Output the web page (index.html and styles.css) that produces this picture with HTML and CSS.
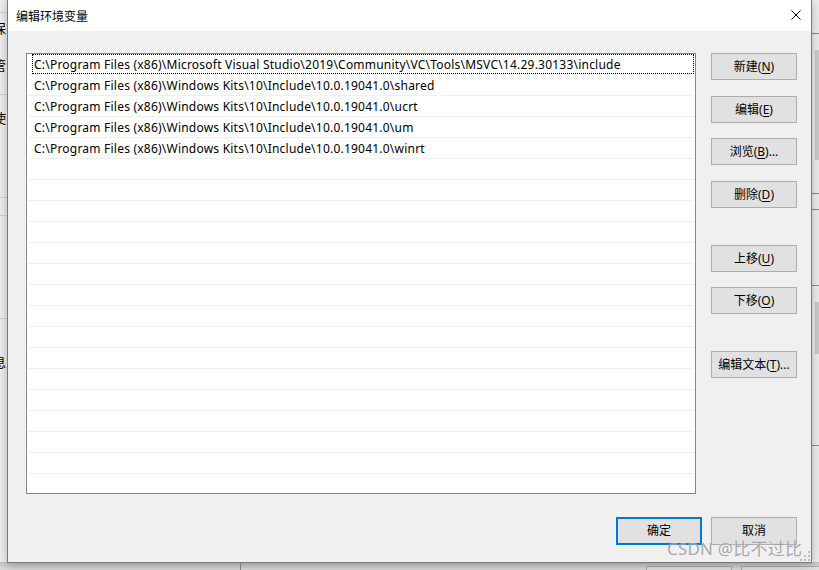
FILE: index.html
```html
<!DOCTYPE html>
<html lang="zh">
<head>
<meta charset="utf-8">
<title>编辑环境变量</title>
<link rel="stylesheet" href="styles.css">
</head>
<body>
<div class="desktop">
  <div class="bgwin">
    <span class="frag f1">保</span>
    <span class="frag f2">管</span>
    <span class="frag f3">使</span>
    <span class="frag f4">息</span>
    <div class="hl h1"></div>
    <div class="hl h2"></div>
    <div class="hl h3"></div>
    <div class="hl h4"></div>
    <div class="hl h5"></div>
    <div class="rstrip">
      <div class="rline r1"></div>
      <div class="rline r2"></div>
      <div class="rline r3"></div>
      <div class="rline r4"></div>
      <div class="rline r5"></div>
      <div class="thumb t1"></div>
      <div class="thumb t2"></div>
    </div>
    <div class="bstrip">
      <div class="bdiv"></div>
      <div class="bbox b1"></div>
      <div class="bbox b2"></div>
    </div>
  </div>

  <div class="dialog">
    <div class="titlebar">
      <span class="title">编辑环境变量</span>
      <svg class="close" width="10" height="10" viewBox="0 0 10 10"><path d="M0.5 0.5L9.5 9.5M9.5 0.5L0.5 9.5" stroke="#000" stroke-width="1" fill="none"/></svg>
    </div>
    <div class="content">
      <div class="main">
        <div class="list">
          <div class="row"><div class="cell focus">C:\Program Files (x86)\Microsoft Visual Studio\2019\Community\VC\Tools\MSVC\14.29.30133\include</div></div>
          <div class="row"><div class="cell">C:\Program Files (x86)\Windows Kits\10\Include\10.0.19041.0\shared</div></div>
          <div class="row"><div class="cell">C:\Program Files (x86)\Windows Kits\10\Include\10.0.19041.0\ucrt</div></div>
          <div class="row"><div class="cell">C:\Program Files (x86)\Windows Kits\10\Include\10.0.19041.0\um</div></div>
          <div class="row"><div class="cell">C:\Program Files (x86)\Windows Kits\10\Include\10.0.19041.0\winrt</div></div>
          <div class="row"><div class="cell"></div></div>
          <div class="row"><div class="cell"></div></div>
          <div class="row"><div class="cell"></div></div>
          <div class="row"><div class="cell"></div></div>
          <div class="row"><div class="cell"></div></div>
          <div class="row"><div class="cell"></div></div>
          <div class="row"><div class="cell"></div></div>
          <div class="row"><div class="cell"></div></div>
          <div class="row"><div class="cell"></div></div>
          <div class="row"><div class="cell"></div></div>
          <div class="row"><div class="cell"></div></div>
          <div class="row"><div class="cell"></div></div>
          <div class="row"><div class="cell"></div></div>
          <div class="row"><div class="cell"></div></div>
          <div class="row"><div class="cell"></div></div>
          <div class="row"><div class="cell"></div></div>
        </div>
        <div class="side">
          <button class="btn">新建(<u>N</u>)</button>
          <button class="btn g15">编辑(<u>E</u>)</button>
          <button class="btn g15b">浏览(<u>B</u>)...</button>
          <button class="btn g16">删除(<u>D</u>)</button>
          <button class="btn g37">上移(<u>U</u>)</button>
          <button class="btn g15b">下移(<u>O</u>)</button>
          <button class="btn g37">编辑文本(<u>T</u>)...</button>
        </div>
      </div>
      <div class="footer">
        <button class="btn ok">确定</button>
        <button class="btn">取消</button>
      </div>
    </div>
    <svg class="grip" width="10" height="10" viewBox="0 0 10 10">
      <rect x="8" y="0" width="2" height="2" fill="#bdbdbd"/>
      <rect x="4" y="4" width="2" height="2" fill="#bdbdbd"/>
      <rect x="8" y="4" width="2" height="2" fill="#bdbdbd"/>
      <rect x="0" y="8" width="2" height="2" fill="#bdbdbd"/>
      <rect x="4" y="8" width="2" height="2" fill="#bdbdbd"/>
      <rect x="8" y="8" width="2" height="2" fill="#bdbdbd"/>
    </svg>
  </div>
  <div class="watermark">CSDN @比不过比</div>
</div>
</body>
</html>
```

FILE: styles.css
```css
* { box-sizing: border-box; }
html, body { margin: 0; padding: 0; }
body {
  width: 819px;
  height: 570px;
  overflow: hidden;
  background: #f0f0f0;
  font-family: "Noto Sans", "Noto Sans CJK SC", sans-serif;
  font-size: 12px;
  color: #000;
}
.desktop { position: relative; width: 819px; height: 570px; overflow: hidden; }

/* background window */
.bgwin { position: absolute; inset: 0; background: #f0f0f0; }
.frag { position: absolute; left: -7px; font-family: "Noto Sans CJK SC", sans-serif; font-size: 13px; color: #000; line-height: 16px; }
.f1 { top: 20px; }
.f2 { top: 57px; }
.f3 { top: 110px; }
.f4 { top: 354px; }
.hl { position: absolute; left: 0; width: 8px; height: 1px; background: #cfcfcf; }
.h1 { top: 12px; }
.h2 { top: 94px; }
.h3 { top: 197px; }
.h4 { top: 215px; }
.h5 { top: 318px; }
.rstrip { position: absolute; left: 812px; top: 0; width: 7px; height: 570px; background: #f0f0f0; }
.rline { position: absolute; left: 0; width: 7px; height: 1px; background: #8a8a8a; }
.r1 { top: 33px; }
.r2 { top: 193px; }
.r3 { top: 209px; }
.r4 { top: 285px; }
.r5 { top: 445px; }
.thumb { position: absolute; left: 3px; width: 4px; background: #cdcdcd; }
.t1 { top: 50px; height: 110px; }
.t2 { top: 302px; height: 52px; }
.bstrip { position: absolute; left: 0; top: 562px; width: 819px; height: 8px; background: linear-gradient(#c4c4c4, #dedede); }
.bdiv { position: absolute; left: 240px; top: 0; width: 1px; height: 8px; background: #8a8a8a; }
.bbox { position: absolute; top: 4px; height: 6px; border: 1px solid #adadad; background: #e1e1e1; }
.b1 { left: 646px; width: 86px; }
.b2 { left: 741px; width: 86px; }

/* dialog */
.dialog {
  position: absolute;
  left: 7px;
  top: -1px;
  width: 805px;
  height: 564px;
  background: #f0f0f0;
  border: 1px solid #7a7a7a;
  box-shadow: 0 2px 10px rgba(0, 0, 0, 0.28);
  display: flex;
  flex-direction: column;
}
.titlebar {
  height: 31px;
  background: #fff;
  display: flex;
  align-items: center;
  padding: 0 10px 0 8px;
  flex: none;
}
.title { font-family: "Noto Sans CJK SC", sans-serif; font-size: 12px; line-height: 16px; }
.close { margin-left: auto; margin-top: -1px; }

.content { padding: 22px 14px 0 18px; display: flex; flex-direction: column; }
.main { display: flex; gap: 15px; }
.list {
  width: 670px;
  height: 441px;
  background: #fff;
  border: 1px solid #828790;
  padding: 0 1px;
  overflow: hidden;
  flex: none;
}
.row { height: 21px; border-bottom: 1px solid #efefef; display: flex; }
.cell {
  flex: 1;
  margin-left: 4px;
  padding: 1px 0 0 1px;
  white-space: nowrap;
  overflow: hidden;
  border: 1px solid transparent;
  line-height: 17px;
  letter-spacing: 0.22px;
}
.cell.focus { border: 1px dotted #000; }

.side { display: flex; flex-direction: column; width: 86px; }
.btn {
  width: 86px;
  height: 27px;
  background: #e1e1e1;
  border: 1px solid #adadad;
  font-family: "Noto Sans", "Noto Sans CJK SC", sans-serif;
  font-size: 12px;
  color: #000;
  padding: 0;
  line-height: 16px;
}
.btn u { text-decoration: underline; text-underline-offset: 2px; }
.g15 { margin-top: 16px; }
.g15b { margin-top: 15px; }
.g16 { margin-top: 16px; }
.g37 { margin-top: 37px; }

.footer { display: flex; justify-content: flex-end; gap: 9px; margin-top: 23px; }
.ok { border: 2px solid #0078d7; height: 28px; }
.footer .btn { height: 28px; }

.grip { position: absolute; right: 1px; bottom: 1px; }

.watermark {
  position: absolute;
  left: 667px;
  top: 538px;
  font-family: "Noto Sans", "Noto Sans CJK SC", sans-serif;
  font-size: 17px;
  letter-spacing: 0.2px;
  color: rgba(110, 110, 110, 0.62);
  text-shadow: 0 0 1px rgba(255, 255, 255, 0.9);
  white-space: nowrap;
  line-height: 22px;
}
```
